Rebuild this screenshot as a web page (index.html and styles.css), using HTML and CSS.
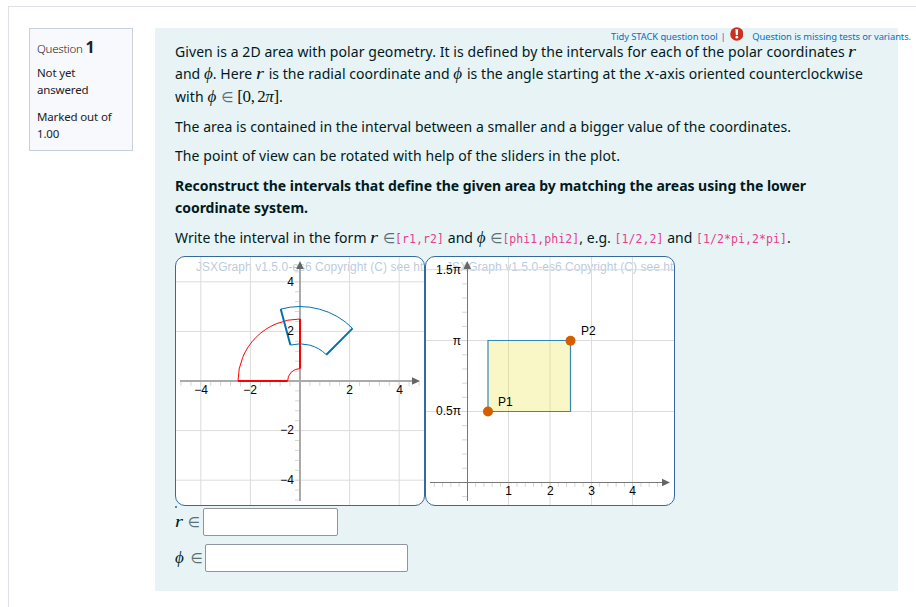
FILE: index.html
```html
<!DOCTYPE html>
<html lang="en">
<head>
<meta charset="utf-8">
<title>Question 1</title>
<link rel="stylesheet" href="styles.css">
</head>
<body>
<main class="page">
  <aside class="info">
    <h3 class="no">Question <b>1</b></h3>
    <div class="state">Not yet<br>answered</div>
    <div class="grade">Marked out of<br>1.00</div>
  </aside>
  <section class="formulation">
    <div class="tools"><a>Tidy STACK question tool</a><span class="bar">|</span><svg class="alert" width="14" height="14" viewBox="0 0 14 14"><circle cx="7" cy="7" r="6.8" fill="#ca3120"/><path d="M5.6 2.2h2.8L8 8H6z" fill="#fff"/><circle cx="7" cy="10.3" r="1.4" fill="#fff"/></svg><a>Question is missing tests or variants.</a></div>
    <p class="intro"><span class="line l1">Given is a 2D area with polar geometry. It is defined by the intervals for each of the polar coordinates <i class="r">r</i></span>
    <span class="line l2">and <i class="tight">ϕ</i>. Here <i class="r">r</i> is the radial coordinate and <i>ϕ</i> is the angle starting at the <i class="x">x</i>-axis oriented counterclockwise</span>
    <span class="line l3">with <i>ϕ</i> <span class="in">∈</span> <span class="m">[0, 2<i>π</i>]</span>.</span></p>
    <p class="p1"><span class="line l4">The area is contained in the interval between a smaller and a bigger value of the coordinates.</span></p>
    <p class="p2"><span class="line l5">The point of view can be rotated with help of the sliders in the plot.</span></p>
    <p class="strong"><span class="line l6">Reconstruct the intervals that define the given area by matching the areas using the lower</span>
    <span class="line l7">coordinate system.</span></p>
    <p class="form"><span class="line l8">Write the interval in the form <i class="r">r</i> <span class="in">∈</span><code>[r1,r2]</code> and <i>ϕ</i> <span class="in">∈</span><code>[phi1,phi2]</code>, e.g. <code>[1/2,2]</code> and <code>[1/2*pi,2*pi]</code>.</span></p>
    <div class="boards">
      <div class="board"><svg width="248" height="248" viewBox="0 0 248 248">
        <text class="copy" x="20" y="14">JSXGraph v1.5.0-es6 Copyright (C) see ht</text>
        <path class="grid" d="M24.8 0V248M74.4 0V248M173.6 0V248M223.2 0V248M0 24.8H248M0 74.4H248M0 173.6H248M0 223.2H248"/>
        <path class="ticks" d="M4.96 124v5m9.92-5v5m9.92-5v5m9.92-5v5m9.92-5v5m9.92-5v5m9.92-5v5m9.92-5v5m9.92-5v5m9.92-5v5m9.92-5v5m9.92-5v5m9.92-5v5m9.92-5v5m9.92-5v5m9.92-5v5m9.92-5v5m9.92-5v5m9.92-5v5m9.92-5v5m9.92-5v5m9.92-5v5m9.92-5v5m9.92-5v5m9.92-5v5"/>
        <path class="ticks" d="M119 14.88h5m-5 9.92h5m-5 9.92h5m-5 9.92h5m-5 9.92h5m-5 9.92h5m-5 9.92h5m-5 9.92h5m-5 9.92h5m-5 9.92h5m-5 9.92h5m-5 9.92h5m-5 9.92h5m-5 9.92h5m-5 9.92h5m-5 9.92h5m-5 9.92h5m-5 9.92h5m-5 9.92h5m-5 9.92h5m-5 9.92h5m-5 9.92h5m-5 9.92h5m-5 9.92h5"/>
        <path d="M4 124H238M124 244V12" stroke="#aaa" stroke-width="2"/>
        <path d="M236 120.2L244 124L236 127.8ZM120.2 12L124 4L127.8 12Z" fill="#666"/>
        <path class="red" d="M62 124A62 62 0 0 1 124 62M111.6 124A12.4 12.4 0 0 1 124 111.6"/>
        <path class="red thick" d="M124 62V111.6M111.6 124H62"/>
        <path class="blue" d="M104.7 52.1A74.4 74.4 0 0 1 176.6 71.4M114.4 88.1A37.2 37.2 0 0 1 150.3 97.7"/>
        <path class="blue thick" d="M104.7 52.1L114.4 88.1M150.3 97.7L176.6 71.4"/>
        <g class="lab mid"><text x="25" y="137">−4</text><text x="74" y="137">−2</text><text x="173.5" y="137">2</text><text x="223.5" y="137">4</text></g>
        <g class="lab end"><text x="118" y="29">4</text><text x="118" y="78">2</text><text x="118" y="177">−2</text><text x="118" y="227">−4</text></g>
      </svg></div>
      <div class="board"><svg width="248" height="248" viewBox="0 0 248 248">
        <text class="copy" x="20" y="14">JSXGraph v1.5.0-es6 Copyright (C) see ht</text>
        <path class="grid" d="M82.5 0V248M124 0V248M165.5 0V248M206.5 0V248M0 12.7H248M0 83.5H248M0 154.5H248"/>
        <path class="ticks" d="M8.3 225v5m8.266-5v5m8.266-5v5m8.266-5v5m8.266-5v5m8.266-5v5m8.266-5v5m8.266-5v5m8.266-5v5m8.266-5v5m8.266-5v5m8.266-5v5m8.266-5v5m8.266-5v5m8.266-5v5m8.266-5v5m8.266-5v5m8.266-5v5m8.266-5v5m8.266-5v5m8.266-5v5m8.266-5v5m8.266-5v5m8.266-5v5m8.266-5v5m8.266-5v5m8.266-5v5m8.266-5v5"/>
        <path class="ticks" d="M36 12.7h5m-5 14.18h5m-5 14.18h5m-5 14.18h5m-5 14.18h5m-5 14.18h5m-5 14.18h5m-5 14.18h5m-5 14.18h5m-5 14.18h5m-5 14.18h5m-5 14.18h5m-5 14.18h5m-5 14.18h5m-5 14.18h5m-5 14.18h5m-5 14.18h5"/>
        <path d="M4 225.5H238M41.5 244V12" stroke="#777"/>
        <path d="M236 221.7L244 225.5L236 229.3ZM37.5 12L41.3 4L45.1 12Z" fill="#666"/>
        <path d="M62 83.5H144.5V154.5H62Z" fill="#f0e442" fill-opacity=".3"/>
        <path d="M62 83.5H144.5V154.5H62Z" stroke="#2f88b5" stroke-width="1.2"/>
        <circle cx="62" cy="154.5" r="5" fill="#d55e00"/><circle cx="144.5" cy="83.7" r="5" fill="#d55e00"/>
        <g class="lab mid"><text x="82.5" y="238">1</text><text x="124.3" y="238">2</text><text x="165.5" y="238">3</text><text x="206.5" y="238">4</text></g>
        <g class="lab end"><text x="35" y="17">1.5π</text><text x="35" y="88">π</text><text x="35" y="158">0.5π</text></g>
        <g class="lab"><text x="72" y="149">P1</text><text x="155" y="78">P2</text></g>
      </svg></div>
    </div>
    <div class="speck"></div>
    <div class="answer a1"><span class="line"><i class="r">r</i> <span class="in">∈</span></span><input type="text" class="w1" aria-label="r interval"></div>
    <div class="answer a2"><span class="line"><i>ϕ</i> <span class="in">∈</span></span><input type="text" class="w2" aria-label="phi interval"></div>
  </section>
</main>
</body>
</html>
```
FILE: styles.css
```css
* { box-sizing: border-box; }
body { margin: 0; padding: 6px 0 0 8px; overflow: hidden; background: #fff; color: #1d2125; font-family: "Noto Sans", sans-serif; }
.page { display: flex; align-items: flex-start; gap: 22px; height: 601px; padding: 21px 0 0 20px; border: solid #dee2e6; border-width: 1px 0 0 1px; }
.info { flex: none; width: 104px; height: 123px; padding: 8px 7px; border: 1px solid #cad0d7; background: #f8f9fc; font-size: 11.5px; line-height: 17px; letter-spacing: -.15px; white-space: nowrap; }
.no { margin: 0; font-size: 11.5px; font-weight: 300; line-height: 20px; letter-spacing: -.25px; }
.no b { font-size: 16px; font-weight: 700; }
.state { margin-top: 5px; }
.grade { margin-top: 10px; }
.formulation { flex: none; width: 743px; height: 563px; padding-left: 20px; background: #e7f3f5; color: #001a1e; }
.tools { display: flex; align-items: center; width: 300px; height: 14px; margin-left: 436px; padding-top: 3px; font-size: 9.4px; line-height: 14px; letter-spacing: -.08px; color: #0f6cbf; white-space: nowrap; }
.bar { margin: 0 4px 0 3px; }
.alert { margin: -5px 9px 0 0; }
p { margin: 0; font-size: 14px; }
.line { display: block; height: 22px; line-height: 22px; white-space: nowrap; }
.intro { margin-top: -1px; }
.l1 { letter-spacing: .07px; }
.l2 { letter-spacing: .055px; }
.l3 { margin-top: 1px; letter-spacing: .1px; }
.l4 { letter-spacing: .045px; }
.l5 { letter-spacing: .09px; }
.l6, .l7 { letter-spacing: -.025px; }
.l8 { letter-spacing: .03px; }
.p1, .form { margin-top: 8px; }
.p2 { margin-top: 7px; }
.strong { margin-top: 8px; font-weight: 700; }
i, .m { font-family: "Liberation Serif", serif; font-size: 17px; line-height: 1px; }
i { padding-right: 1px; }
.tight { padding: 0; }
.r, .x { display: inline-block; padding: 0; transform: scaleX(1.2); transform-origin: left; }
.r { width: 9px; }
.x { width: 10px; }
.m { letter-spacing: -.3px; word-spacing: -1.5px; }
.m i { padding: 0; font-size: inherit; }
.in { font-family: "DejaVu Sans", sans-serif; font-size: 14px; line-height: 1px; color: #5b7175; }
code { font-family: "DejaVu Sans Mono", monospace; font-size: 11.5px; line-height: 1px; letter-spacing: .07px; color: #e83e8c; }
.boards { display: flex; height: 250px; margin-top: 7px; }
.board { width: 250px; height: 250px; border: 1px solid #356aa0; border-radius: 10px; overflow: hidden; background: #fff; }
svg { display: block; fill: none; }
.copy, .lab { font-family: "Liberation Sans", sans-serif; font-size: 12px; }
.copy { fill: #356aa0; opacity: .35; letter-spacing: .05px; }
.lab { fill: #000; }
.mid { text-anchor: middle; }
.end { text-anchor: end; }
.grid { stroke: #dcdcdc; }
.ticks { stroke: #d6d6d6; }
.red { stroke: #f00; }
.blue { stroke: #0072b2; }
.thick { stroke-width: 2; }
.speck { width: 2px; height: 2px; background: #5b86b5; }
.answer { display: flex; align-items: center; height: 28px; font-size: 14px; }
.a2 { margin-top: 8px; }
.answer .line { flex: none; width: 28px; }
.a2 .line { width: 30px; }
.a2 .in { margin-left: 2px; }
input { height: 28px; padding: 0; border: 1px solid #8f959e; border-radius: 2px; background: #fff; }
.w1 { width: 135px; }
.w2 { width: 203px; }
```
